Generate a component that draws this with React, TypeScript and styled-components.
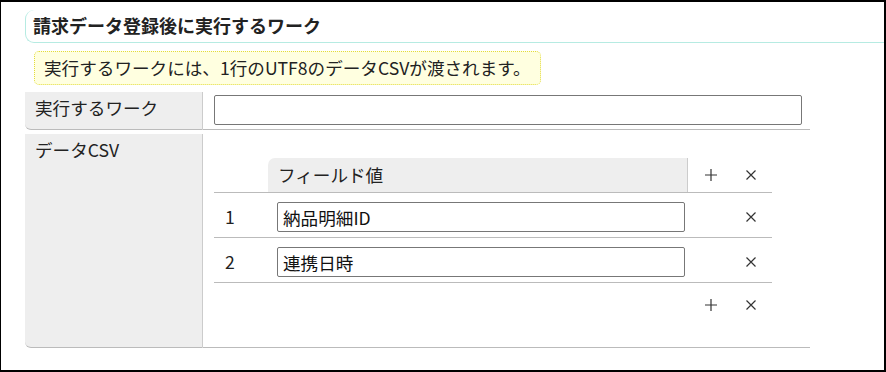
import React from 'react';
import styled, { createGlobalStyle } from 'styled-components';

const GlobalStyle = createGlobalStyle`
  body {
    margin: 0;
    background: #fff;
    font-family: "Noto Sans CJK JP", "Noto Sans", sans-serif;
    color: #222;
  }
`;

const Frame = styled.div`
  width: 886px;
  height: 372px;
  box-sizing: border-box;
  border-style: solid;
  border-color: #000;
  border-width: 2px 2px 2px 1px;
  padding: 8px 0 0 24px;
  overflow: hidden;
`;

const SectionTitle = styled.h3`
  margin: 0;
  height: 32px;
  box-sizing: content-box;
  padding: 0 0 0 7px;
  border-left: 1px solid #b6ebe2;
  border-bottom: 1px solid #b6ebe2;
  border-radius: 9px 0 0 9px;
  font-size: 18px;
  font-weight: bold;
  line-height: 30px;
  color: #222;
`;

const Notice = styled.div`
  display: inline-block;
  margin: 8px 0 0 9px;
  height: 32px;
  padding: 0 9px;
  border: 1px dotted #e3dc3c;
  border-radius: 5px;
  background: #ffffe0;
  font-size: 17.6px;
  line-height: 32px;
  color: #222;
`;

const Form = styled.div`
  display: flex;
  flex-direction: column;
  gap: 4px;
  width: 785px;
  margin-top: 7px;
`;

const Row = styled.div`
  display: flex;
`;

const Label = styled.div`
  width: 157px;
  flex-shrink: 0;
  padding: 3px 10px 0;
  background: #eee;
  border-right: 1px solid #ccc;
  border-bottom: 1px solid #bbb;
  border-bottom-left-radius: 6px;
  font-size: 17.6px;
  line-height: 26px;
  color: #222;
`;

const Value = styled.div<{ $tall?: boolean }>`
  flex: 1;
  border-bottom: 1px solid #bbb;
  padding: ${(p) => (p.$tall ? '24px 8px 20px 11px' : '3px 8px 4px 11px')};
`;

const TextInput = styled.input`
  display: block;
  box-sizing: border-box;
  width: ${(p) => p.width ?? '100%'};
  height: 30px;
  margin: 0;
  padding: 0 5px;
  border: 1px solid #777;
  border-radius: 2px;
  font-family: "Noto Sans CJK JP", "Noto Sans", sans-serif;
  font-size: 17.6px;
  color: #111;
  background: #fff;
  outline: none;
`;

const Grid = styled.div`
  width: 558px;
`;

const GridRow = styled.div<{ $head?: boolean; $foot?: boolean }>`
  display: grid;
  grid-template-columns: 54px 420px 45px 39px;
  align-items: center;
  box-sizing: content-box;
  padding: ${(p) => (p.$head ? '0' : p.$foot ? '7px 0 0' : '9px 0 5px')};
  height: ${(p) => (p.$head ? '34px' : p.$foot ? '37px' : '30px')};
  border-bottom: ${(p) => (p.$foot ? 'none' : '1px solid #bbb')};
`;

const HeadCell = styled.div`
  align-self: stretch;
  box-sizing: border-box;
  padding-left: 10px;
  background: #eee;
  border-right: 1px solid #ccc;
  border-top-left-radius: 7px;
  font-size: 17.6px;
  line-height: 34px;
  color: #222;
`;

const NumCell = styled.div`
  padding-left: 11px;
  font-size: 17.6px;
  line-height: 30px;
  color: #222;
`;

const FieldCell = styled.div`
  padding-left: 9px;
`;

const IconCell = styled.div<{ $top?: boolean; $del?: boolean }>`
  display: flex;
  justify-content: center;
  align-items: center;
  height: 30px;
  padding-right: ${(p) => (p.$del ? '4px' : '0')};
  align-self: ${(p) => (p.$top ? 'start' : 'center')};
`;

const PlusIcon = () => (
  <svg width="12" height="12" viewBox="0 0 12 12">
    <path d="M6 0V12M0 6H12" stroke="#333" strokeWidth="1.2" fill="none" />
  </svg>
);

const CrossIcon = () => (
  <svg width="10" height="10" viewBox="0 0 10 10">
    <path d="M0.5 0.5L9.5 9.5M9.5 0.5L0.5 9.5" stroke="#333" strokeWidth="1.2" fill="none" />
  </svg>
);

const fields = ['納品明細ID', '連携日時'];

export default function App() {
  return (
    <>
      <GlobalStyle />
      <Frame>
        <SectionTitle>請求データ登録後に実行するワーク</SectionTitle>
        <Notice>実行するワークには、1行のUTF8のデータCSVが渡されます。</Notice>
        <Form>
          <Row>
            <Label>実行するワーク</Label>
            <Value>
              <TextInput defaultValue="" />
            </Value>
          </Row>
          <Row>
            <Label>データCSV</Label>
            <Value $tall>
              <Grid>
                <GridRow $head>
                  <div />
                  <HeadCell>フィールド値</HeadCell>
                  <IconCell><PlusIcon /></IconCell>
                  <IconCell $del><CrossIcon /></IconCell>
                </GridRow>
                {fields.map((f, i) => (
                  <GridRow key={f}>
                    <NumCell>{i + 1}</NumCell>
                    <FieldCell>
                      <TextInput width="408px" defaultValue={f} />
                    </FieldCell>
                    <div />
                    <IconCell $del><CrossIcon /></IconCell>
                  </GridRow>
                ))}
                <GridRow $foot>
                  <div />
                  <div />
                  <IconCell $top><PlusIcon /></IconCell>
                  <IconCell $top $del><CrossIcon /></IconCell>
                </GridRow>
              </Grid>
            </Value>
          </Row>
        </Form>
      </Frame>
    </>
  );
}
